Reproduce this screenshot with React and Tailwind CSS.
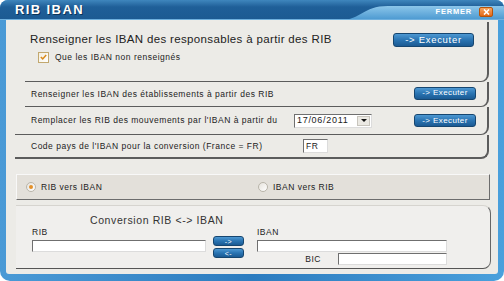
import React from 'react';

function BlueButton({ children, className }) {
  return (
    <div
      className={`flex items-center justify-center rounded-[3px] border border-[#164670] bg-linear-to-b from-[#4d98d2] via-[#2a74b2] to-[#1b5a93] text-white leading-none ${className}`}
    >
      {children}
    </div>
  );
}

function Radio({ checked }) {
  return (
    <div className="flex h-[10px] w-[10px] items-center justify-center rounded-full border border-[#b9b5aa] bg-linear-to-br from-[#e6e3dc] to-white">
      {checked && <div className="h-[4px] w-[4px] rounded-full bg-[#e3902a]" />}
    </div>
  );
}

function Field({ className, children }) {
  return (
    <div
      className={`border border-t-[#6f6f6f] border-l-[#6f6f6f] border-r-[#dcdcdc] border-b-[#dcdcdc] bg-white ${className}`}
    >
      {children}
    </div>
  );
}

export default function App() {
  return (
    <div className="h-[281px] w-[504px] bg-white font-['Liberation_Sans',Arial,sans-serif] text-[#222]">
      <div className="flex h-full flex-col overflow-hidden rounded-t-[8px] rounded-b-[10px] bg-linear-to-r from-[#4a9ad6] via-[#2c7cbf] to-[#4aa0dc]">
        {/* title bar */}
        <div className="relative flex h-[20px] items-center justify-between pl-[15px] pr-[11px]">
          <svg className="absolute inset-0" width="504" height="20" viewBox="0 0 504 20">
            <defs>
              <linearGradient id="tb" x1="0" y1="0" x2="0" y2="1">
                <stop offset="0" stopColor="#3f86bd" />
                <stop offset="0.35" stopColor="#1f5f98" />
                <stop offset="1" stopColor="#1c5a92" />
              </linearGradient>
              <linearGradient id="tr" x1="0" y1="0" x2="0" y2="1">
                <stop offset="0" stopColor="#8cc6ea" />
                <stop offset="1" stopColor="#4a98d0" />
              </linearGradient>
            </defs>
            <rect width="504" height="20" fill="url(#tb)" />
            <path d="M340 20 C 362 20 362 6 388 6 L504 6 L504 20 Z" fill="url(#tr)" />
            <rect y="19" width="504" height="1" fill="#6fb0de" />
          </svg>
          <span className="relative text-[13px] font-bold tracking-[1.4px] text-white [text-shadow:1px_1px_0_#0d3458]">
            RIB IBAN
          </span>
          <div className="relative mt-[3px] flex items-center gap-[7px]">
            <span className="text-[7.5px] font-bold tracking-[0.8px] text-white">FERMER</span>
            <div className="flex h-[10px] w-[14px] items-center justify-center rounded-[2px] border border-[#b4530c] bg-linear-to-b from-[#f6a35a] to-[#e2670f]">
              <svg width="7" height="6" viewBox="0 0 7 6">
                <path d="M1 0.5 L6 5.5 M6 0.5 L1 5.5" stroke="white" strokeWidth="1.6" />
              </svg>
            </div>
          </div>
        </div>

        {/* body */}
        <div className="mx-[6px] h-[254px] rounded-b-[3px] bg-[#ecebe7] pt-[2px] text-[8.5px] tracking-[0.5px]">
          <div className="ml-[9px] w-[474px]">
            <div className="ml-[10px] h-[60px] rounded-br-[8px] border-r-2 border-b border-[#5c5c5c] pl-[5px] pr-[13px] pt-[11px]">
              <div className="flex h-[14px] items-center justify-between">
                <span className="text-[11.5px] tracking-[0.35px]">Renseigner les IBAN des responsables à partir des RIB</span>
                <BlueButton className="h-[14px] w-[81px] text-[9.5px] tracking-[0.7px]">-&gt; Executer</BlueButton>
              </div>
              <div className="ml-[8px] mt-[4px] flex items-center gap-[6px]">
                <div className="flex h-[11px] w-[11px] items-center justify-center border border-[#c2a86f] bg-linear-to-br from-[#f3eedf] to-white">
                  <svg width="7" height="6" viewBox="0 0 7 6">
                    <path d="M0.8 3 L2.7 4.9 L6.2 1" fill="none" stroke="#d98a1c" strokeWidth="1.5" />
                  </svg>
                </div>
                <span>Que les IBAN non renseignés</span>
              </div>
            </div>

            <div className="ml-[10px] flex h-[25px] items-center justify-between rounded-br-[8px] border-r-2 border-b border-[#5c5c5c] pl-[6px] pr-[11px]">
              <span>Renseigner les IBAN des établissements à partir des RIB</span>
              <BlueButton className="mt-[-2px] h-[13px] w-[62px] text-[8px] tracking-[0.4px]">-&gt; Executer</BlueButton>
            </div>

            <div className="flex h-[28px] items-center rounded-br-[8px] border-r-2 border-b border-[#5c5c5c] pl-[16px] pr-[11px]">
              <span className="w-[263px]">Remplacer les RIB des mouvements par l'IBAN à partir du</span>
              <Field className="flex h-[14px] w-[78px] items-center justify-between pl-[2px] pr-[1px]">
                <span className="text-[9px] leading-none tracking-[0.7px]">17/06/2011</span>
                <div className="flex h-[10px] w-[13px] items-center justify-center border border-[#c8c5bd] bg-[#ebe9e3]">
                  <svg width="6" height="3" viewBox="0 0 6 3">
                    <path d="M0 0 L6 0 L3 3 Z" fill="#111" />
                  </svg>
                </div>
              </Field>
              <BlueButton className="ml-auto h-[13px] w-[62px] text-[8px] tracking-[0.4px]">-&gt; Executer</BlueButton>
            </div>

            <div className="flex h-[24px] items-center rounded-br-[8px] border-r-2 border-b-2 border-[#5c5c5c] pl-[16px]">
              <span className="w-[272px]">Code pays de l'IBAN pour la conversion (France = FR)</span>
              <Field className="flex h-[14px] w-[25px] items-center pl-[2px]">
                <span className="leading-none">FR</span>
              </Field>
            </div>
          </div>

          <div className="ml-[10px] mt-[15px] flex h-[26px] w-[474px] items-center border border-t-[#f8f8f8] border-l-[#f8f8f8] border-r-[#6c6c6c] border-b-[#6c6c6c] bg-[#e3e0da] pl-[9px]">
            <div className="flex w-[232px] items-center gap-[5px]">
              <Radio checked />
              <span>RIB vers IBAN</span>
            </div>
            <div className="flex items-center gap-[5px]">
              <Radio />
              <span>IBAN vers RIB</span>
            </div>
          </div>

          <div className="ml-[10px] mt-[5px] h-[64px] w-[475px] rounded-r-[8px] border-t border-r border-b border-t-[#d6d4cf] border-r-[#666] border-b-[#555] bg-[#f0efed] pl-[16px] pt-[8px]">
            <div className="pl-[58px] text-[10.5px] leading-[13px] tracking-[0.6px] text-[#333]">Conversion RIB &lt;-&gt; IBAN</div>
            <div className="flex">
              <div className="w-[174px]">
                <div className="leading-[10px]">RIB</div>
                <Field className="mt-[3px] h-[12px] w-[174px]" />
              </div>
              <div className="ml-[7px] mt-[9px] flex flex-col gap-[2px]">
                <BlueButton className="h-[10px] w-[31px] text-[7px]">-&gt;</BlueButton>
                <BlueButton className="h-[10px] w-[31px] text-[7px]">&lt;-</BlueButton>
              </div>
              <div className="ml-[13px] w-[190px]">
                <div className="leading-[10px]">IBAN</div>
                <Field className="mt-[3px] h-[12px] w-[190px]" />
                <div className="mt-[1px] flex items-center justify-end">
                  <span className="mr-[17px]">BIC</span>
                  <Field className="h-[12px] w-[109px]" />
                </div>
              </div>
            </div>
          </div>
        </div>
      </div>
    </div>
  );
}
